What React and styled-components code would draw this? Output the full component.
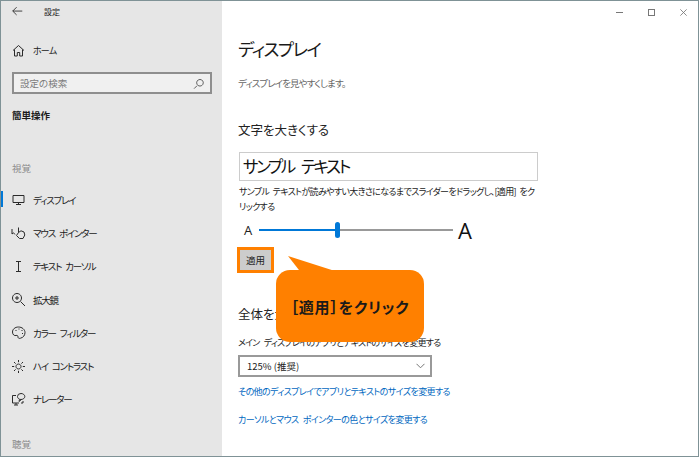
import React from 'react';
import styled, { createGlobalStyle } from 'styled-components';

const GlobalStyle = createGlobalStyle`
  html, body { margin: 0; padding: 0; background: #fff; }
  body {
    font-family: "Noto Sans CJK JP", "Noto Sans", sans-serif;
    font-feature-settings: "palt";
    color: #222;
  }
`;

const navItems = [
  { label: 'ディスプレイ', icon: 'display', active: true },
  { label: 'マウス ポインター', icon: 'pointer' },
  { label: 'テキスト カーソル', icon: 'cursor' },
  { label: '拡大鏡', icon: 'zoom' },
  { label: 'カラー フィルター', icon: 'palette' },
  { label: 'ハイ コントラスト', icon: 'sun' },
  { label: 'ナレーター', icon: 'narrator' },
];

const paths = {
  back: <path d="M13 7H2M6.500 2.500 2 7l4.500 4.500" />,
  home: <path d="M2 7.500 7.500 2.500l5.500 5M3.500 6.500v6.500h2.800V9.500h2.400V13h2.800V6.500" />,
  search: <path d="M5.500 10.500 1.500 14.500M9.500 2a4.500 4.500 0 1 0 .01 0Z" />,
  display: <path d="M2 3.500h11v7H2ZM7.500 10.500v1.800M5 12.500h5" />,
  pointer: (
    <path d="M1 4v5l1.500-1.200L4 9.500M7.500 7.500V2.500M7.500 7.500l2.500-1.700 3 1.200.8 3-1.800 3.500H8.500L5.500 10.500l2-3Z" />
  ),
  cursor: <path d="M5 2.500h5M7.500 2.500v10M5 12.500h5" />,
  zoom: <path d="M9.500 9.500 14 14M6 1.500a4.500 4.500 0 1 0 .01 0ZM6 4v4M4 6h4" />,
  palette: (
    <path d="M7.500 2C4 2 1.500 4.200 1.500 7s2 4 3.500 3.500 2 .5 2 1.500 .8 1.800 2.500 1.200C12.500 12.500 14 10 14 7.500 14 4.500 11 2 7.500 2ZM4.500 5.500h1M7.500 4h1M10.500 5.500h1M11 8.500h1" />
  ),
  sun: (
    <path d="M7.500 5a2.500 2.500 0 1 0 .01 0ZM7.500 1v2.200M7.500 11.800V14M1 7.500h2.200M11.800 7.500H14M3 3l1.600 1.600M10.400 10.400 12 12M12 3l-1.600 1.600M4.600 10.400 3 12" />
  ),
  narrator: (
    <path d="M5 3.500H1.500v7.500H8M5 11v2M3 13h4M10 1.500a3.500 3 0 0 0-3.500 3c0 1.700 1.500 3 3.500 3s3.800-1.300 3.800-3-1.800-3-3.800-3ZM8.500 7.500 8 9.500l2.500-2M12 9v2h-2" />
  ),
};

const Icon = ({ name, size = 15 }) => (
  <IconSvg width={size} height={size} viewBox="0 0 15 15">
    {paths[name]}
  </IconSvg>
);

export default function App() {
  return (
    <>
      <GlobalStyle />
      <Frame>
        <Sidebar>
          <TitleRow>
            <Icon name="back" size={13} />
            <TitleText>設定</TitleText>
          </TitleRow>
          <HomeRow>
            <Icon name="home" />
            <span>ホーム</span>
          </HomeRow>
          <SearchBox>
            <span>設定の検索</span>
            <Icon name="search" size={11} />
          </SearchBox>
          <SectionTitle>簡単操作</SectionTitle>
          <GroupLabel>視覚</GroupLabel>
          <NavList>
            {navItems.map((item) => (
              <NavItem key={item.label} $active={item.active}>
                <Icon name={item.icon} />
                <span>{item.label}</span>
              </NavItem>
            ))}
          </NavList>
          <GroupLabel $bottom>聴覚</GroupLabel>
        </Sidebar>

        <Main>
          <WindowControls>
            <MinButton />
            <MaxButton />
            <CloseIcon width="10" height="10" viewBox="0 0 10 10">
              <path d="M.5.500l9 9M9.500.500l-9 9" />
            </CloseIcon>
          </WindowControls>
          <Content>
            <PageTitle>ディスプレイ</PageTitle>
            <Subtitle>ディスプレイを見やすくします。</Subtitle>
            <Heading>文字を大きくする</Heading>
            <SampleBox>サンプル テキスト</SampleBox>
            <Description>
              サンプル テキストが読みやすい大きさになるまでスライダーをドラッグし、[適用] をクリックする
            </Description>
            <SliderRow>
              <SmallA>A</SmallA>
              <Track>
                <TrackFill />
                <Thumb />
                <TrackRest />
              </Track>
              <LargeA>A</LargeA>
            </SliderRow>
            <ApplyHighlight>
              <ApplyButton>適用</ApplyButton>
            </ApplyHighlight>
            <Heading2>全体を大きくする</Heading2>
            <ScaleLabel>メイン ディスプレイのアプリとテキストのサイズを変更する</ScaleLabel>
            <Select>
              <span>125% (推奨)</span>
              <Chevron width="9" height="6" viewBox="0 0 9 6">
                <path d="M.5.800l4 4 4-4" />
              </Chevron>
            </Select>
            <FirstLink>その他のディスプレイでアプリとテキストのサイズを変更する</FirstLink>
            <SecondLink>カーソルとマウス ポインターの色とサイズを変更する</SecondLink>
          </Content>
        </Main>

        <Callout>［適用］をクリック</Callout>
      </Frame>
    </>
  );
}

const Frame = styled.div`
  position: relative;
  box-sizing: border-box;
  width: 699px;
  height: 457px;
  display: flex;
  overflow: hidden;
  border: 1px solid #7f9296;
  background: #fff;
`;

const IconSvg = styled.svg`
  flex: none;
  fill: none;
  stroke: #2b2b2b;
  stroke-width: 1;
`;

const Sidebar = styled.aside`
  width: 221px;
  flex: none;
  background: #e6e6e6;
  display: flex;
  flex-direction: column;
`;

const TitleRow = styled.div`
  display: flex;
  align-items: center;
  height: 20px;
  padding-left: 10px;
  font-size: 8px;
`;

const TitleText = styled.span`
  margin-left: 20px;
`;

const HomeRow = styled.div`
  display: flex;
  align-items: center;
  gap: 7px;
  margin-top: 19px;
  height: 20px;
  padding-left: 10px;
  font-size: 9px;
  letter-spacing: -0.8px;
`;

const SearchBox = styled.div`
  box-sizing: border-box;
  margin: 12px 0 0 11px;
  width: 200px;
  height: 22px;
  padding: 0 6px 0 6px;
  display: flex;
  align-items: center;
  justify-content: space-between;
  border: 2px solid #8e8e8e;
  background: #f0f0f0;
  font-size: 9.500px;
  color: #7c7c7c;
`;

const SectionTitle = styled.div`
  margin: 13px 0 0 11px;
  font-size: 9.500px;
  font-weight: 700;
  line-height: 16px;
  color: #1a1a1a;
`;

const GroupLabel = styled.div`
  margin: ${(p) => (p.$bottom ? '20px' : '37px')} 0 0 11px;
  font-size: 9.500px;
  line-height: 16px;
  color: #8a8a8a;
`;

const NavList = styled.nav`
  margin-top: 7px;
  display: flex;
  flex-direction: column;
`;

const NavItem = styled.div`
  box-sizing: border-box;
  height: 33.300px;
  display: flex;
  align-items: center;
  gap: 7px;
  padding-left: 10px;
  font-size: 9.500px;
  letter-spacing: -1.200px;
  word-spacing: 3px;
  color: #1a1a1a;
  position: relative;
  &::before {
    content: '';
    display: ${(p) => (p.$active ? 'block' : 'none')};
    position: absolute;
    left: 0;
    top: 8px;
    width: 2px;
    height: 16px;
    background: #0078d7;
  }
`;

const Main = styled.main`
  flex: 1;
  display: flex;
  flex-direction: column;
`;

const WindowControls = styled.div`
  display: flex;
  justify-content: flex-end;
  align-items: center;
  height: 22px;
  padding-right: 11px;
  gap: 25px;
`;

const MinButton = styled.div`
  width: 7px;
  height: 1px;
  background: #777;
`;

const MaxButton = styled.div`
  box-sizing: border-box;
  width: 7px;
  height: 7px;
  border: 1px solid #777;
`;

const CloseIcon = styled.svg`
  width: 7px;
  height: 7px;
  fill: none;
  stroke: #777;
  stroke-width: 1.200;
`;

const Content = styled.div`
  padding: 13px 0 0 16px;
  display: flex;
  flex-direction: column;
  align-items: flex-start;
`;

const PageTitle = styled.h1`
  margin: 0;
  font-size: 17.500px;
  font-weight: 400;
  letter-spacing: -1.500px;
  line-height: 26px;
  color: #1a1a1a;
`;

const Subtitle = styled.p`
  margin: 14px 0 0;
  font-size: 9.500px;
  letter-spacing: -0.900px;
  line-height: 14px;
  color: #666;
`;

const Heading = styled.h2`
  margin: 31px 0 0;
  font-size: 12.500px;
  font-weight: 400;
  line-height: 18px;
  color: #222;
`;

const SampleBox = styled.div`
  box-sizing: border-box;
  margin: 13px 0 0 1px;
  width: 299px;
  height: 29px;
  padding-left: 3px;
  border: 1px solid #ccc;
  font-size: 16.500px;
  letter-spacing: -2.400px;
  word-spacing: 6px;
  line-height: 27px;
  color: #111;
`;

const Description = styled.p`
  margin: 4px 0 0 1px;
  width: 300px;
  font-size: 9px;
  letter-spacing: -0.650px;
  word-spacing: 2px;
  line-height: 14.500px;
  color: #222;
`;

const SliderRow = styled.div`
  display: flex;
  align-items: center;
  margin: 6px 0 0 6px;
  height: 20px;
`;

const SmallA = styled.span`
  font-family: "Open Sans", "Liberation Sans", sans-serif;
  font-size: 13px;
  width: 15px;
  color: #222;
`;

const Track = styled.div`
  display: flex;
  align-items: center;
  width: 194px;
`;

const TrackFill = styled.div`
  width: 76px;
  height: 2px;
  background: #0078d7;
`;

const TrackRest = styled.div`
  flex: 1;
  height: 2px;
  background: #999;
`;

const Thumb = styled.div`
  width: 5px;
  height: 16px;
  border-radius: 3px;
  background: #0078d7;
`;

const LargeA = styled.span`
  font-family: "Open Sans", "Liberation Sans", sans-serif;
  font-size: 22px;
  margin-left: 5px;
  color: #111;
`;

const ApplyHighlight = styled.div`
  margin: 7px 0 0 -1px;
  border: 3px solid #ff8000;
`;

const ApplyButton = styled.div`
  box-sizing: border-box;
  width: 31px;
  height: 20px;
  background: #cccccc;
  font-size: 9.500px;
  line-height: 20px;
  text-align: center;
  color: #222;
`;

const Heading2 = styled(Heading)`
  margin-top: 32px;
`;

const ScaleLabel = styled.p`
  margin: 13px 0 0;
  font-size: 9px;
  letter-spacing: -0.750px;
  word-spacing: 3px;
  line-height: 14px;
  color: #222;
`;

const Select = styled.div`
  box-sizing: border-box;
  margin: 5px 0 0;
  width: 194px;
  height: 22px;
  padding: 0 5px 0 7px;
  display: flex;
  align-items: center;
  justify-content: space-between;
  border: 2px solid #999;
  font-size: 9.500px;
  color: #222;
`;

const Chevron = styled.svg`
  fill: none;
  stroke: #777;
  stroke-width: 1;
`;

const FirstLink = styled.a`
  margin-top: 8px;
  font-size: 9px;
  letter-spacing: -0.600px;
  word-spacing: 3px;
  line-height: 14px;
  color: #0067c0;
`;

const SecondLink = styled(FirstLink)`
  margin-top: 14px;
`;

const Callout = styled.div`
  position: absolute;
  left: 275px;
  top: 269px;
  width: 148px;
  height: 72px;
  border-radius: 14px;
  background: #ff8000;
  display: flex;
  align-items: center;
  justify-content: center;
  font-size: 15px;
  font-weight: 700;
  letter-spacing: 0.800px;
  color: #1a1a1a;
  &::before {
    content: '';
    position: absolute;
    left: 12px;
    top: -14px;
    width: 50px;
    height: 16px;
    background: #ff8000;
    clip-path: polygon(0 0, 100% 100%, 25% 100%);
  }
`;
